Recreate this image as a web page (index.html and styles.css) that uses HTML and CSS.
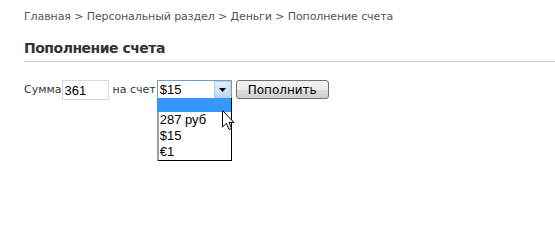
FILE: index.html
```html
<!DOCTYPE html>
<html lang="ru">
<head>
<meta charset="utf-8">
<title>Пополнение счета</title>
<link rel="stylesheet" href="styles.css">
</head>
<body>
<div class="page">
  <div class="crumbs">Главная &gt; Персональный раздел &gt; Деньги &gt; Пополнение счета</div>
  <h1 class="title">Пополнение счета</h1>
  <div class="row">
    <span class="label">Сумма</span>
    <input class="amount" type="text" value="361">
    <span class="label label-to">на счет</span>
    <div class="combo">
      <div class="combo-box">
        <span class="combo-value">$15</span>
        <span class="combo-btn">
          <svg width="7" height="4" viewBox="0 0 7 4"><path d="M0 0H7L3.5 4Z" fill="#000"/></svg>
        </span>
      </div>
      <div class="combo-list">
        <div class="opt opt-sel">&nbsp;</div>
        <div class="opt">287 руб</div>
        <div class="opt">$15</div>
        <div class="opt">€1</div>
      </div>
      <svg class="cursor" width="13" height="21" viewBox="0 0 13 21">
        <path d="M0.5 0.5V17L4.4 13.3L7 19.5L9.6 18.4L7 12.4H12Z" fill="#fff" stroke="#000" stroke-width="1" stroke-linejoin="round"/>
      </svg>
    </div>
    <button class="submit" type="button">Пополнить</button>
  </div>
</div>
</body>
</html>
```
FILE: styles.css
```css
html, body {
  margin: 0;
  padding: 0;
  background: #fff;
}
.page {
  padding: 9px 0 0 24px;
  font-family: "DejaVu Sans", Verdana, sans-serif;
  font-size: 11px;
  color: #333;
}
.crumbs {
  color: #555;
  line-height: 16px;
  letter-spacing: -0.1px;
}
.title {
  margin: 14px 0 0 0;
  padding: 0 0 4px 0;
  font-size: 14px;
  line-height: 18px;
  font-weight: bold;
  letter-spacing: -0.5px;
  color: #333;
  border-bottom: 1px solid #c8c8c8;
}
.row {
  display: flex;
  align-items: flex-start;
  margin: 18px 0 0 0;
}
.label {
  line-height: 20px;
  color: #333;
}
.label-to {
  margin-left: 4px;
}
.amount {
  box-sizing: border-box;
  width: 47px;
  height: 20px;
  margin: 0;
  padding: 0 2px;
  border: 1px solid #d4dbe3;
  font-family: "Liberation Sans", Arial, sans-serif;
  font-size: 13px;
  color: #000;
  outline: none;
}
.combo {
  position: relative;
  width: 75px;
  margin-left: 1px;
}
.combo-box {
  box-sizing: border-box;
  display: flex;
  height: 19px;
  border: 1px solid #7f9db9;
  background: #fff;
}
.combo-value {
  flex: 1;
  padding-left: 2px;
  font-family: "Liberation Sans", Arial, sans-serif;
  font-size: 13px;
  line-height: 17px;
  color: #000;
}
.combo-btn {
  box-sizing: border-box;
  width: 17px;
  display: flex;
  align-items: center;
  justify-content: center;
  border: 1px solid #b6cde7;
  background: linear-gradient(#e4f0fb, #bcd8f3);
}
.combo-list {
  box-sizing: border-box;
  width: 75px;
  margin-top: -1px;
  background: #fff;
  border-left: 2px solid #a0a0a0;
  border-right: 1px solid #000;
  border-bottom: 1px solid #000;
  font-family: "Liberation Sans", Arial, sans-serif;
  font-size: 13px;
  color: #000;
}
.opt {
  line-height: 16px;
  padding-left: 1px;
}
.opt-sel {
  height: 14px;
  background: #3399ff;
  margin-left: -2px;
  padding-left: 3px;
}
.cursor {
  position: absolute;
  left: 65px;
  top: 30px;
}
.submit {
  box-sizing: border-box;
  width: 93px;
  height: 19px;
  margin-left: 4px;
  padding: 0;
  border: 1px solid #707070;
  border-radius: 3px;
  background: linear-gradient(#f2f2f2 0%, #ebebeb 50%, #dddddd 51%, #cfcfcf 100%);
  font-family: "DejaVu Sans", Verdana, sans-serif;
  font-size: 12px;
  color: #000;
}
```
